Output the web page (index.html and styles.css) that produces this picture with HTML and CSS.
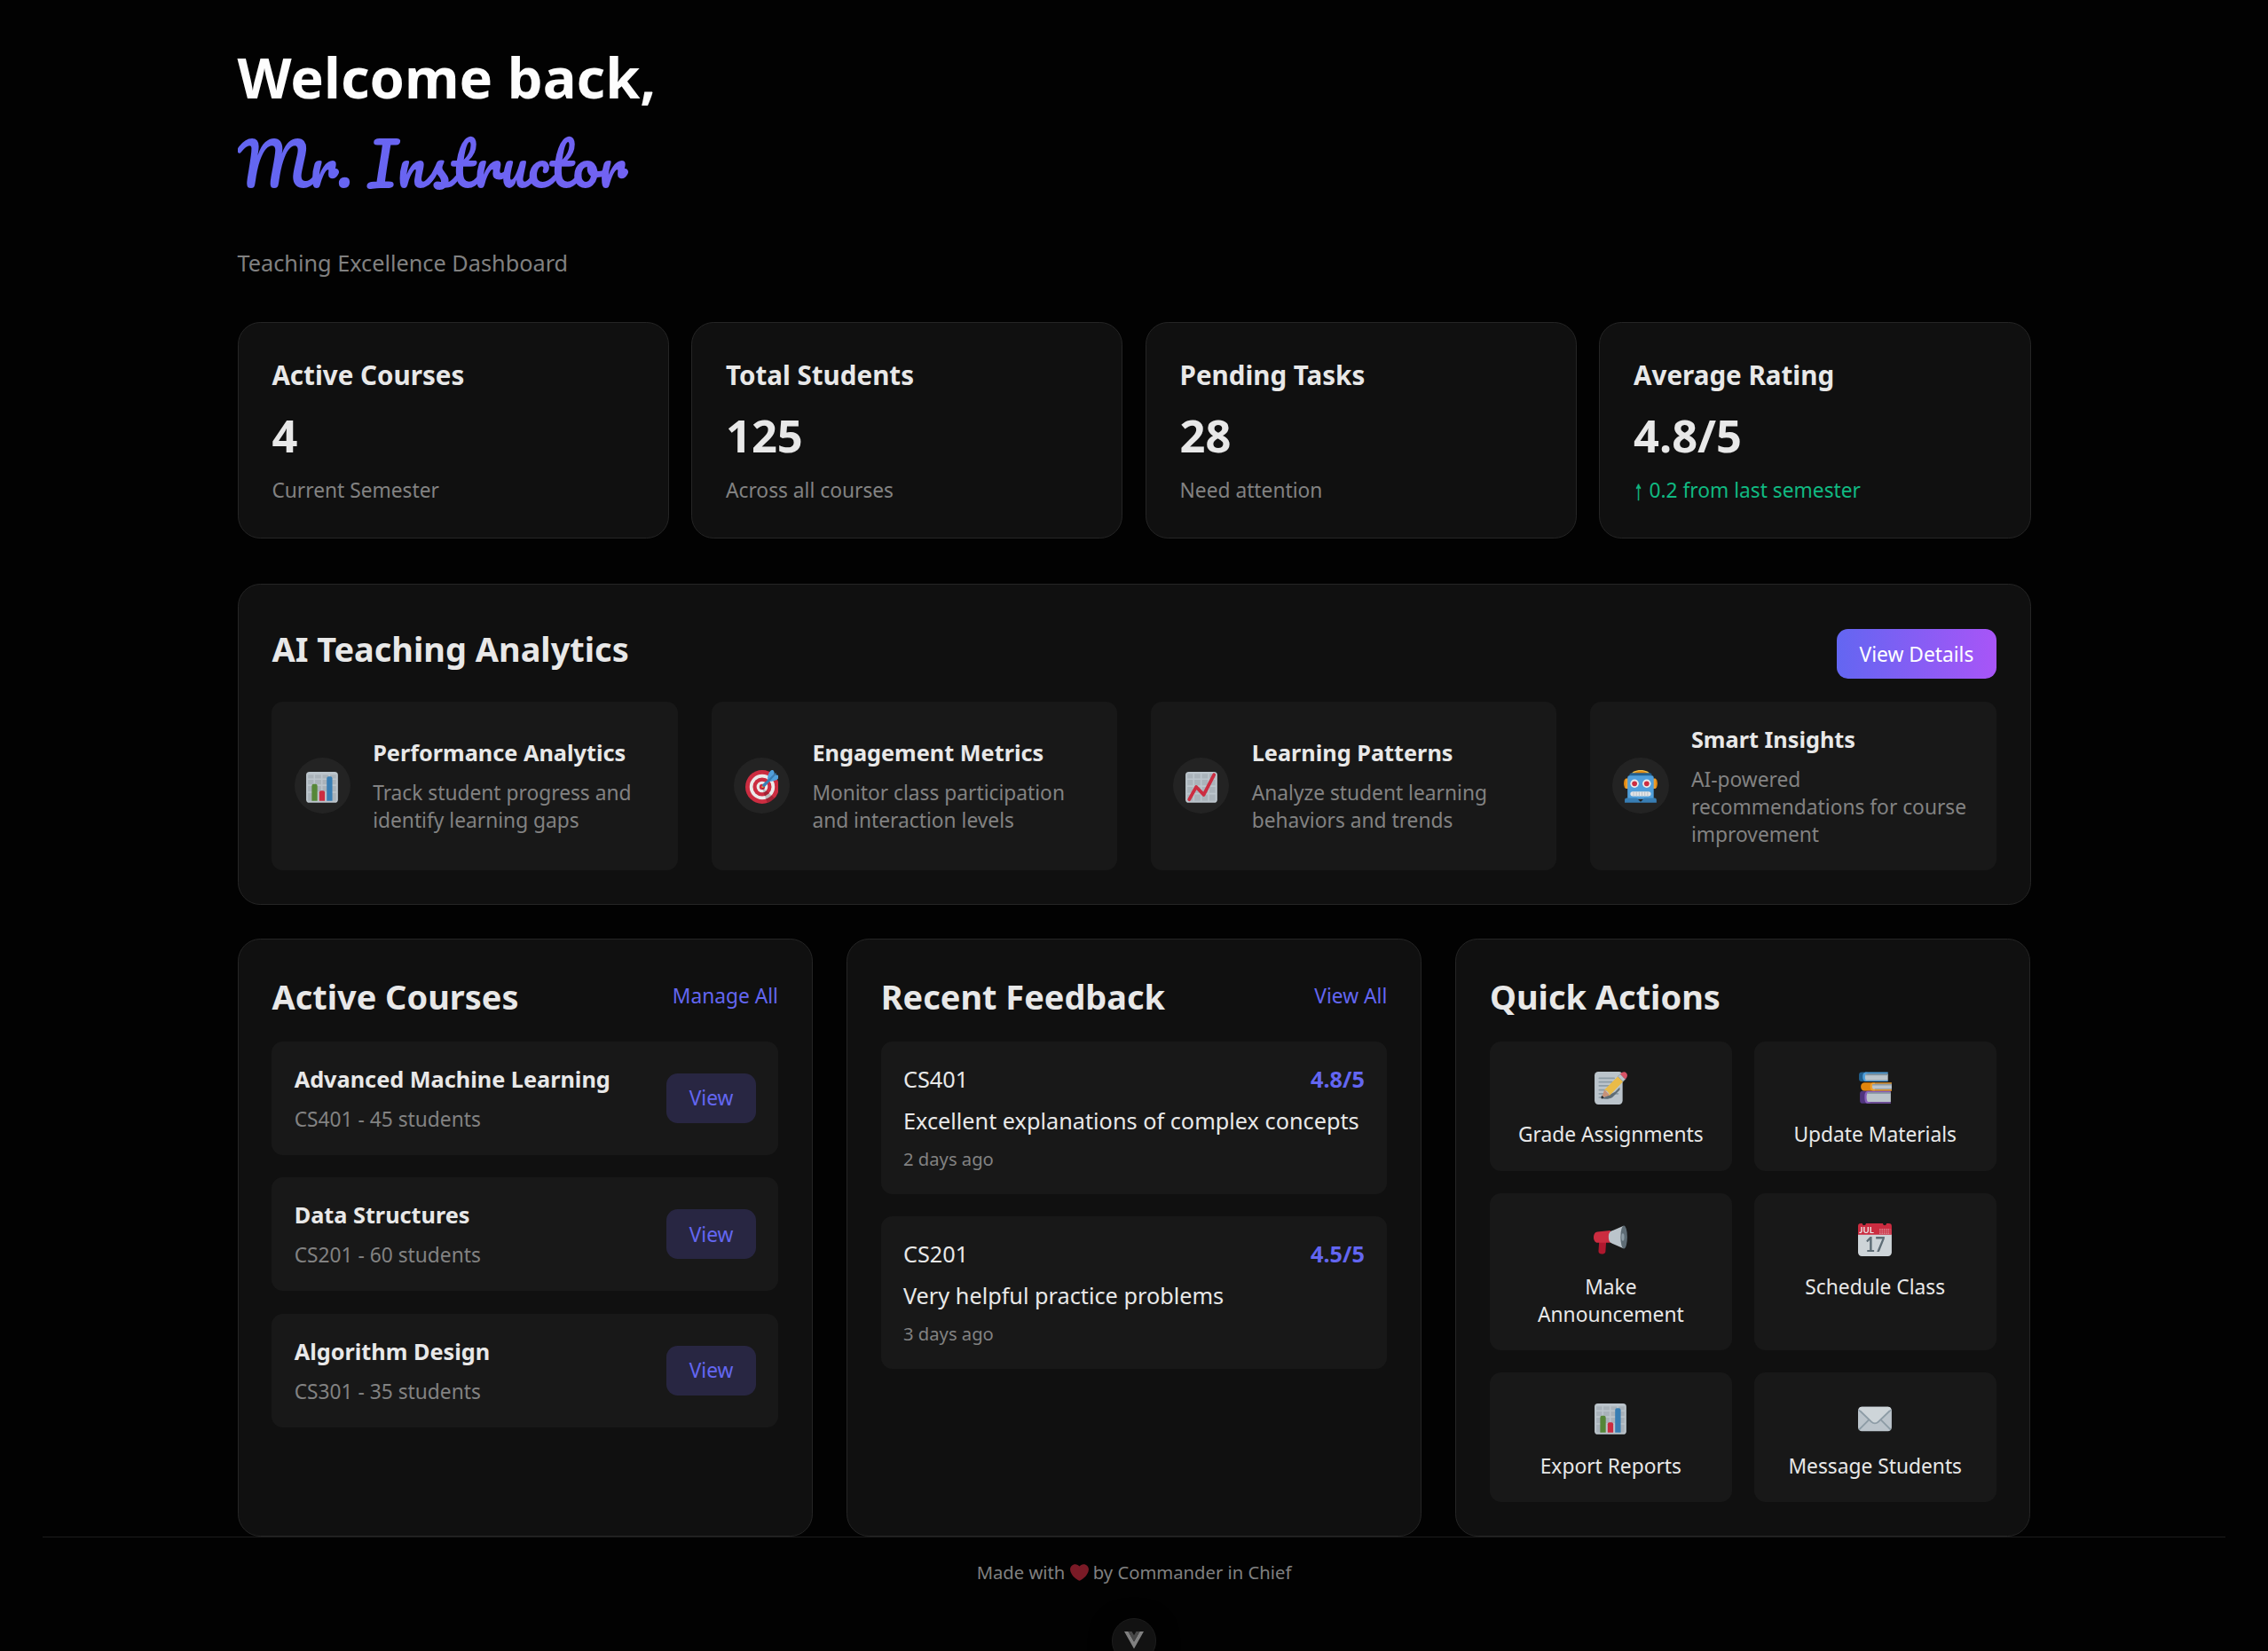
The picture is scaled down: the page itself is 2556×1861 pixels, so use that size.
FILE: index.html
```html
<!DOCTYPE html>
<html lang="en">
<head>
<meta charset="utf-8">
<title>Teaching Excellence Dashboard</title>
<link rel="stylesheet" href="styles.css">
</head>
<body>
<svg class="sprite" aria-hidden="true">
  <symbol id="i-chart" viewBox="0 0 36 36">
    <rect x="1" y="2" width="34" height="33" rx="3.5" fill="#CCD6DD"/>
    <path fill="#B8C2CA" d="M3 5h6v4H3zM10.500 5H17v4h-6.500zM18.500 5H25v4h-6.500zM26.500 5H33v4h-6.500zM3 10.500h6v5H3zM10.500 10.500H17v5h-6.500zM18.500 10.500H25v5h-6.500zM26.500 10.500H33v5h-6.500zM3 17h6v6H3zM10.500 17H17v6h-6.500zM18.500 17H25v6h-6.500zM26.500 17H33v6h-6.500zM3 24.500h6V33H3zM26.500 24.500H33V33h-6.500z"/>
    <path fill="#5C913B" d="M13 33H7V17a2 2 0 0 1 2-2h2a2 2 0 0 1 2 2z"/>
    <path fill="#3B88C3" d="M29 33h-6V9a2 2 0 0 1 2-2h2a2 2 0 0 1 2 2z"/>
    <path fill="#DD2E44" d="M21 33h-6v-9a2 2 0 0 1 2-2h2a2 2 0 0 1 2 2z"/>
  </symbol>
  <symbol id="i-target" viewBox="0 0 36 36">
    <circle cx="18" cy="18" r="18" fill="#DD2E44"/>
    <circle cx="18" cy="18" r="13.500" fill="#FFF"/>
    <circle cx="18" cy="18" r="10" fill="#DD2E44"/>
    <circle cx="18" cy="18" r="6" fill="#FFF"/>
    <circle cx="18" cy="18" r="3" fill="#DD2E44"/>
    <path opacity=".2" d="M18.240 18.282l13.144 11.754s-2.647 3.376-7.890 5.109L17.579 18.420z"/>
    <path fill="#FFAC33" d="M18.294 19a.994.994 0 0 1-.704-1.699l.563-.563a.995.995 0 0 1 1.408 1.407l-.564.563a.987.987 0 0 1-.703.292z"/>
    <path fill="#55ACEE" d="M24.016 6.981c-.403 2.079 0 4.691 0 4.691l7.054-7.388c.291-1.454-.528-3.932-1.718-4.238-1.190-.306-4.079.803-5.336 6.935zm5.003 5.003c-2.079.403-4.691 0-4.691 0l7.388-7.054c1.454-.291 3.932.528 4.238 1.718.306 1.190-.803 4.079-6.935 5.336z"/>
    <path fill="#3A87C2" d="M32.798 4.485L21.176 17.587c-.362.362-1.673.882-2.510.046-.836-.836-.419-2.080-.057-2.443L31.815 3.501s.676-.635 1.159-.152-.176 1.136-.176 1.136z"/>
  </symbol>
  <symbol id="i-trend" viewBox="0 0 36 36">
    <rect x="1" y="2" width="34" height="33" rx="3.500" fill="#CCD6DD"/>
    <path fill="#B8C2CA" d="M3 4h6v5H3zM10.500 4H17v5h-6.500zM18.500 4H25v5h-6.500zM26.500 4H33v5h-6.500zM3 10.500h6v6H3zM10.500 10.500H17v6h-6.500zM18.500 10.500H25v6h-6.500zM26.500 10.500H33v6h-6.500zM3 18h6v6.500H3zM10.500 18H17v6.500h-6.500zM18.500 18H25v6.500h-6.500zM26.500 18H33v6.500h-6.500zM3 26h6v7H3zM10.500 26H17v7h-6.500zM18.500 26H25v7h-6.500zM26.500 26H33v7h-6.500z"/>
    <path fill="none" stroke="#DD2E44" stroke-width="3.600" stroke-linecap="round" stroke-linejoin="round" d="M5 31.500L12.500 18l8 8.500L31.500 5"/>
  </symbol>
  <symbol id="i-robot" viewBox="0 0 36 36">
    <ellipse cx="33.500" cy="14.500" rx="2.500" ry="5.500" fill="#F4900C"/>
    <ellipse cx="2.500" cy="14.500" rx="2.500" ry="5.500" fill="#F4900C"/>
    <path fill="#FFAC33" d="M34 19a1 1 0 0 1-1 1h-3a1 1 0 0 1-1-1v-9a1 1 0 0 1 1-1h3a1 1 0 0 1 1 1zM7 19a1 1 0 0 1-1 1H3a1 1 0 0 1-1-1v-9a1 1 0 0 1 1-1h3a1 1 0 0 1 1 1z"/>
    <path fill="#FFCC4D" d="M28 5c0 2.761-4.478 4-10 4C12.477 9 8 7.761 8 5s4.477-5 10-5c5.522 0 10 2.239 10 5z"/>
    <path fill="#F4900C" d="M25 4.083C25 5.694 21.865 7 18 7s-7-1.306-7-2.917 3.134-2.917 7-2.917 7 1.306 7 2.917z"/>
    <path fill="#269" d="M30 5.500C30 6.881 28.881 7 27.500 7h-19C7.119 7 6 6.881 6 5.500S7.119 3 8.500 3h19A2.500 2.500 0 0 1 30 5.500z"/>
    <path fill="#55ACEE" d="M30 6H6a2 2 0 0 0-2 2v23h28V8a2 2 0 0 0-2-2z"/>
    <path fill="#3B88C3" d="M35 33v-1a2 2 0 0 0-2-2H22.071l-3.364 3.364a.999.999 0 0 1-1.414 0L13.929 30H3a2 2 0 0 0-2 2v3h34z"/>
    <circle cx="24.500" cy="14.500" r="4.500" fill="#FFF"/>
    <circle cx="24.500" cy="14.500" r="2.721" fill="#DD2E44"/>
    <circle cx="11.500" cy="14.500" r="4.500" fill="#FFF"/>
    <circle cx="11.500" cy="14.500" r="2.721" fill="#DD2E44"/>
    <path fill="#F5F8FA" d="M9.500 23h17a2.500 2.500 0 0 1 0 5h-17a2.500 2.500 0 0 1 0-5z"/>
    <path stroke="#CCD6DD" stroke-width="1" d="M10.500 23v5M13.500 23v5M16.500 23v5M19.500 23v5M22.500 23v5M25.500 23v5"/>
  </symbol>
  <symbol id="i-memo" viewBox="0 0 36 36">
    <path fill="#CCD6DD" d="M31 32a4 4 0 0 1-4 4H5a4 4 0 0 1-4-4V5a4 4 0 0 1 4-4h22a4 4 0 0 1 4 4z"/>
    <path fill="none" stroke="#99AAB5" stroke-width="1.600" stroke-linecap="round" d="M6 8h16M6 12h14M6 16h12M6 20.500h8M6 24.500h5M6 28.500h4M22 24.500h4"/>
    <path fill="#66757F" d="M8 29.500l3-1 12-6 5-5v3l-8 8c-3 2-8 2-12 1z"/>
    <path fill="#D99E82" d="M8.500 29l3-8.500 6 5.500z"/>
    <path fill="#292F33" d="M8.300 29.700c-.7-.7 0-2.500.5-3.300l2.500 2.300c-.8.500-2.400 1.500-3 1z"/>
    <path fill="#FFCC4D" d="M11.500 20.500L26 6l5.500 5.500L17 26.500c-.5-3-2.500-5.500-5.500-6z"/>
    <path fill="#CCD6DD" stroke="#99AAB5" stroke-width=".8" d="M26 6l2.500-2.500L34 9l-2.500 2.500z"/>
    <path fill="#EA596E" d="M28.500 3.500C31 .5 33.500.8 35 2.300s1.500 4.200-1 6.700z"/>
  </symbol>
  <symbol id="i-books" viewBox="0 0 36 36">
    <path fill="#226699" d="M4 1.500h6v10H4a3 3 0 0 1-3-3v-4a3 3 0 0 1 3-3z"/>
    <path fill="#55ACEE" d="M32 1.500H9c-3 0-4 2-4 5s1 5 4 5h23v-1.500H8.500V3.300H32z"/>
    <path fill="#CCD6DD" d="M32 3.500H9c-2 0-2 6.700 0 6.700h23z"/>
    <path fill="#99AAB5" d="M8 3.500h24V5H8z"/>
    <path fill="#F4900C" d="M7 12.500h11v9H7a4 4 0 0 1-4-4v-1a4 4 0 0 1 4-4z"/>
    <path fill="#FFAC33" d="M36 12.500H17c-3 0-4 2-4 4.500s1 4.500 4 4.500h19V20H17v-6h19z"/>
    <path fill="#CCD6DD" d="M36 14H17c-2.500 0-2.500 5.800 0 5.800h19z"/>
    <path fill="#99AAB5" d="M15.500 14.200H36v1.500H15z"/>
    <path fill="#553788" d="M5 21.500h8V35H5a3 3 0 0 1-3-3v-7.500a3 3 0 0 1 3-3z"/>
    <path fill="#9266CC" d="M35 21.500H11c-3 0-4 2-4 6.700S8 35 11 35h24v-1.600H11V23.200h24z"/>
    <path fill="#CCD6DD" d="M35 23.300H11c-2.500 0-2.500 10 0 10h24z"/>
    <path fill="#99AAB5" d="M10 23.300h25v1.500H9.500z"/>
  </symbol>
  <symbol id="i-horn" viewBox="0 0 36 36">
    <path fill="#BE1931" d="M6 19h7.500l-.8 12c0 1.700-1.700 2.700-4 2.700S5 32.500 5.200 30.500z"/>
    <path fill="#DD2E44" d="M4 10l14-1.500v13L4 21.500c-2.200 0-4-2.600-4-5.700S1.800 10 4 10z"/>
    <path fill="#CCD6DD" d="M32 3.500l-11.500 5C18 9.300 16 10.500 16 15.500s2 6.500 4.500 7.300l11.500 5z"/>
    <ellipse cx="32.400" cy="15.700" rx="3.600" ry="12.300" fill="#66757F"/>
    <ellipse cx="31.300" cy="15.700" rx="1.500" ry="4" fill="#99AAB5"/>
  </symbol>
  <symbol id="i-calendar" viewBox="0 0 36 36">
    <path fill="#E0E7EC" d="M36 32a4 4 0 0 1-4 4H4a4 4 0 0 1-4-4V9a4 4 0 0 1 4-4h28a4 4 0 0 1 4 4z"/>
    <path fill="#DD2E44" d="M30.500 1a2 2 0 0 1-4 0h-18a2 2 0 0 1-4 0H3a3 3 0 0 0-3 3v9h36V4a3 3 0 0 0-3-3z"/>
    <path fill="none" stroke="#F5C3CA" stroke-width="1.100" stroke-dasharray="1.200 1" d="M23 7.500h11.500M23 9.500h11.500M23 11.500h11.500"/>
    <text x="1.300" y="11.600" class="cal-month" textLength="15.500" lengthAdjust="spacingAndGlyphs">JUL</text>
    <text x="7.500" y="31.700" class="cal-day" textLength="21.500" lengthAdjust="spacingAndGlyphs">17</text>
  </symbol>
  <symbol id="i-mail" viewBox="0 0 36 36">
    <path fill="#CCD6DD" d="M36 27.500a4 4 0 0 1-4 4H4a4 4 0 0 1-4-4v-18a4 4 0 0 1 4-4h28a4 4 0 0 1 4 4z"/>
    <path fill="none" stroke="#99AAB5" stroke-width="1.800" d="M1 30l12.500-12.500M35 30L22.500 17.500"/>
    <path fill="#E1E8ED" stroke="#99AAB5" stroke-width="1.800" d="M.8 8.500l13.700 13.200c2 1.900 5 1.900 7 0L35.200 8.500"/>
    <path fill="#E1E8ED" d="M4 5.500h28c2 0 3.300 1.200 3.300 2.500L34 9H2L.7 8C.8 6.700 2 5.500 4 5.500z"/>
  </symbol>
  <symbol id="i-heart" viewBox="0 0 36 36">
    <path fill="#DD2E44" d="M35.885 11.833c0-5.450-4.418-9.868-9.867-9.868-3.308 0-6.227 1.633-8.018 4.129-1.791-2.496-4.710-4.129-8.017-4.129-5.450 0-9.868 4.417-9.868 9.868 0 .772.098 1.520.266 2.241C1.751 22.587 11.216 31.568 18 34.034c6.783-2.466 16.249-11.447 17.617-19.959.17-.721.268-1.469.268-2.242z"/>
  </symbol>
</svg>

<main class="page">
  <header class="hero">
    <h1 class="hero-title">Welcome back,</h1>
    <div class="hero-name"><span>Mr. Instructor</span></div>
    <p class="hero-sub">Teaching Excellence Dashboard</p>
  </header>

  <section class="stats">
    <article class="card"><h3>Active Courses</h3><div class="num">4</div><p class="note">Current Semester</p></article>
    <article class="card"><h3>Total Students</h3><div class="num">125</div><p class="note">Across all courses</p></article>
    <article class="card"><h3>Pending Tasks</h3><div class="num">28</div><p class="note">Need attention</p></article>
    <article class="card"><h3>Average Rating</h3><div class="num">4.8/5</div><p class="note up"><span class="arrow">↑</span> 0.2 from last semester</p></article>
  </section>

  <section class="card analytics">
    <div class="head"><h2>AI Teaching Analytics</h2><button class="btn primary">View Details</button></div>
    <div class="features">
      <div class="tile feature"><span class="round"><svg class="emoji"><use href="#i-chart"/></svg></span><div><h4>Performance Analytics</h4><p class="note">Track student progress and identify learning gaps</p></div></div>
      <div class="tile feature"><span class="round"><svg class="emoji"><use href="#i-target"/></svg></span><div><h4>Engagement Metrics</h4><p class="note">Monitor class participation and interaction levels</p></div></div>
      <div class="tile feature"><span class="round"><svg class="emoji"><use href="#i-trend"/></svg></span><div><h4>Learning Patterns</h4><p class="note">Analyze student learning behaviors and trends</p></div></div>
      <div class="tile feature"><span class="round"><svg class="emoji"><use href="#i-robot"/></svg></span><div><h4>Smart Insights</h4><p class="note">AI-powered recommendations for course improvement</p></div></div>
    </div>
  </section>

  <section class="columns">
    <article class="card">
      <div class="head"><h2>Active Courses</h2><a class="link">Manage All</a></div>
      <div class="list">
        <div class="tile course"><div><h4>Advanced Machine Learning</h4><p class="note">CS401 - 45 students</p></div><button class="btn soft">View</button></div>
        <div class="tile course"><div><h4>Data Structures</h4><p class="note">CS201 - 60 students</p></div><button class="btn soft">View</button></div>
        <div class="tile course"><div><h4>Algorithm Design</h4><p class="note">CS301 - 35 students</p></div><button class="btn soft">View</button></div>
      </div>
    </article>
    <article class="card">
      <div class="head"><h2>Recent Feedback</h2><a class="link">View All</a></div>
      <div class="list">
        <div class="tile feedback"><div class="row"><span>CS401</span><b>4.8/5</b></div><p>Excellent explanations of complex concepts</p><small>2 days ago</small></div>
        <div class="tile feedback"><div class="row"><span>CS201</span><b>4.5/5</b></div><p>Very helpful practice problems</p><small>3 days ago</small></div>
      </div>
    </article>
    <article class="card">
      <div class="head"><h2>Quick Actions</h2></div>
      <div class="actions">
        <div class="tile action"><span class="pic"><svg class="emoji"><use href="#i-memo"/></svg></span><span>Grade Assignments</span></div>
        <div class="tile action"><span class="pic"><svg class="emoji"><use href="#i-books"/></svg></span><span>Update Materials</span></div>
        <div class="tile action"><span class="pic"><svg class="emoji"><use href="#i-horn"/></svg></span><span>Make Announcement</span></div>
        <div class="tile action"><span class="pic"><svg class="emoji"><use href="#i-calendar"/></svg></span><span>Schedule Class</span></div>
        <div class="tile action"><span class="pic"><svg class="emoji"><use href="#i-chart"/></svg></span><span>Export Reports</span></div>
        <div class="tile action"><span class="pic"><svg class="emoji"><use href="#i-mail"/></svg></span><span>Message Students</span></div>
      </div>
    </article>
  </section>
</main>

<footer class="footer">
  <p class="credit">Made with <svg class="heart"><use href="#i-heart"/></svg> by Commander in Chief</p>
  <span class="badge"><svg viewBox="0 0 22 20"><path fill="#808080" d="M0 0h4.500L11 11.500 17.500 0H22L11 19.500z"/><path fill="#484848" d="M4.500 0h4L11 4.200 13.500 0h4L11 11.500z"/></svg></span>
</footer>
</body>
</html>
```
FILE: styles.css
```css
* { box-sizing: border-box; margin: 0; padding: 0; }
html { font-size: 25.28px; height: 1861px; overflow: hidden; background: #020202; }
body {
  height: 1861px;
  overflow: hidden;
  color: #e8e8e8;
  font-family: "Noto Sans", sans-serif;
  line-height: normal;
}
h2 { font-size: 1.5rem; font-weight: 700; }
h3 { font-size: 1.17rem; font-weight: 700; }
h4 { font-size: 1rem; font-weight: 700; }
.sprite { display: none; }

.page { width: 2021px; margin: 0 auto; padding-top: 43px; }

.hero { height: 320px; }
.hero-title { height: 86px; font-size: 2.5rem; font-weight: 700; color: #fdfdfd; }
.hero-name {
  height: 150px;
  font-family: Pacifico, cursive;
  font-size: 2.61rem;
  line-height: 110px;
  font-weight: 400;
  color: transparent;
  background: linear-gradient(90deg, #6366f1, #a855f7);
  background-clip: text;
  -webkit-background-clip: text;
}
.hero-sub { font-size: 1rem; color: #808080; }

.card {
  padding: 1.5rem;
  background: #101010;
  border: 1px solid #252525;
  border-radius: 1rem;
}
.tile { padding: 1rem; background: #181818; border-radius: .5rem; }
.note { font-size: .9rem; color: #828282; }
.up { color: #10b981; }
.arrow { display: inline-block; font-family: "Liberation Sans", sans-serif; line-height: 1; transform: translateY(-1px) scale(.85, 1.35); -webkit-text-stroke: .6px #10b981; }

.stats { display: grid; grid-template-columns: repeat(4, 1fr); gap: 1rem; margin-bottom: 2rem; }
.num { margin: .5rem 0; font-size: 2rem; font-weight: 700; }

.head { display: flex; justify-content: space-between; align-items: center; margin-bottom: 1rem; }
.btn {
  padding: .5rem 1rem;
  border: 0;
  border-radius: .5rem;
  font: inherit;
  font-size: .9rem;
}
.primary { margin-top: .5rem; color: #fff; background: linear-gradient(90deg, #6366f1, #a855f7); }
.soft { color: #6366f1; background: #282642; }
.link { font-size: .9rem; color: #6366f1; }

.analytics { margin-bottom: 1.5rem; }
.features { display: grid; grid-template-columns: repeat(4, 1fr); gap: 1.5rem; }
.feature { display: flex; align-items: center; gap: 1rem; }
.feature h4, .course h4 { margin-bottom: .5rem; }
.round {
  display: flex;
  flex: none;
  align-items: center;
  justify-content: center;
  width: 2.5rem;
  height: 2.5rem;
  padding-top: 2px;
  border-radius: 50%;
  background: #232323;
}
.emoji { display: block; width: 1.5rem; height: 1.5rem; opacity: .91; }

.columns { display: grid; grid-template-columns: repeat(3, 1fr); gap: 1.5rem; }
.list { display: flex; flex-direction: column; gap: 1rem; }
.course { display: flex; justify-content: space-between; align-items: center; }
.row { display: flex; justify-content: space-between; }
.row b { font-weight: 700; color: #6366f1; }
.feedback p { margin: .5rem 0; }
.feedback small { display: block; font-size: .8rem; color: #828282; }

.actions { display: grid; grid-template-columns: 1fr 1fr; gap: 1rem; }
.action { display: flex; flex-direction: column; align-items: center; gap: .5rem; text-align: center; font-size: .9rem; }
.pic { height: 51.8px; padding-top: 7.6px; }
.cal-month { font: 700 9px Lato, sans-serif; fill: #fff; }
.cal-day { font: 700 22px Lato, sans-serif; fill: #66757f; }

.footer {
  display: flex;
  flex-direction: column;
  align-items: center;
  margin: 0 48px;
  padding-top: 25px;
  border-top: 1px solid #1c1c1c;
}
.credit { height: 66px; font-size: .8rem; color: #808080; }
.heart { width: 21px; height: 21px; vertical-align: -3px; opacity: .55; }
.badge {
  display: flex;
  justify-content: center;
  width: 2rem;
  height: 2rem;
  padding-top: 14px;
  border: 1px solid #1c1c1c;
  border-radius: 50%;
  background: #121212;
  box-shadow: 0 4px 24px #000;
}
.badge svg { width: 22px; height: 20px; }
```
